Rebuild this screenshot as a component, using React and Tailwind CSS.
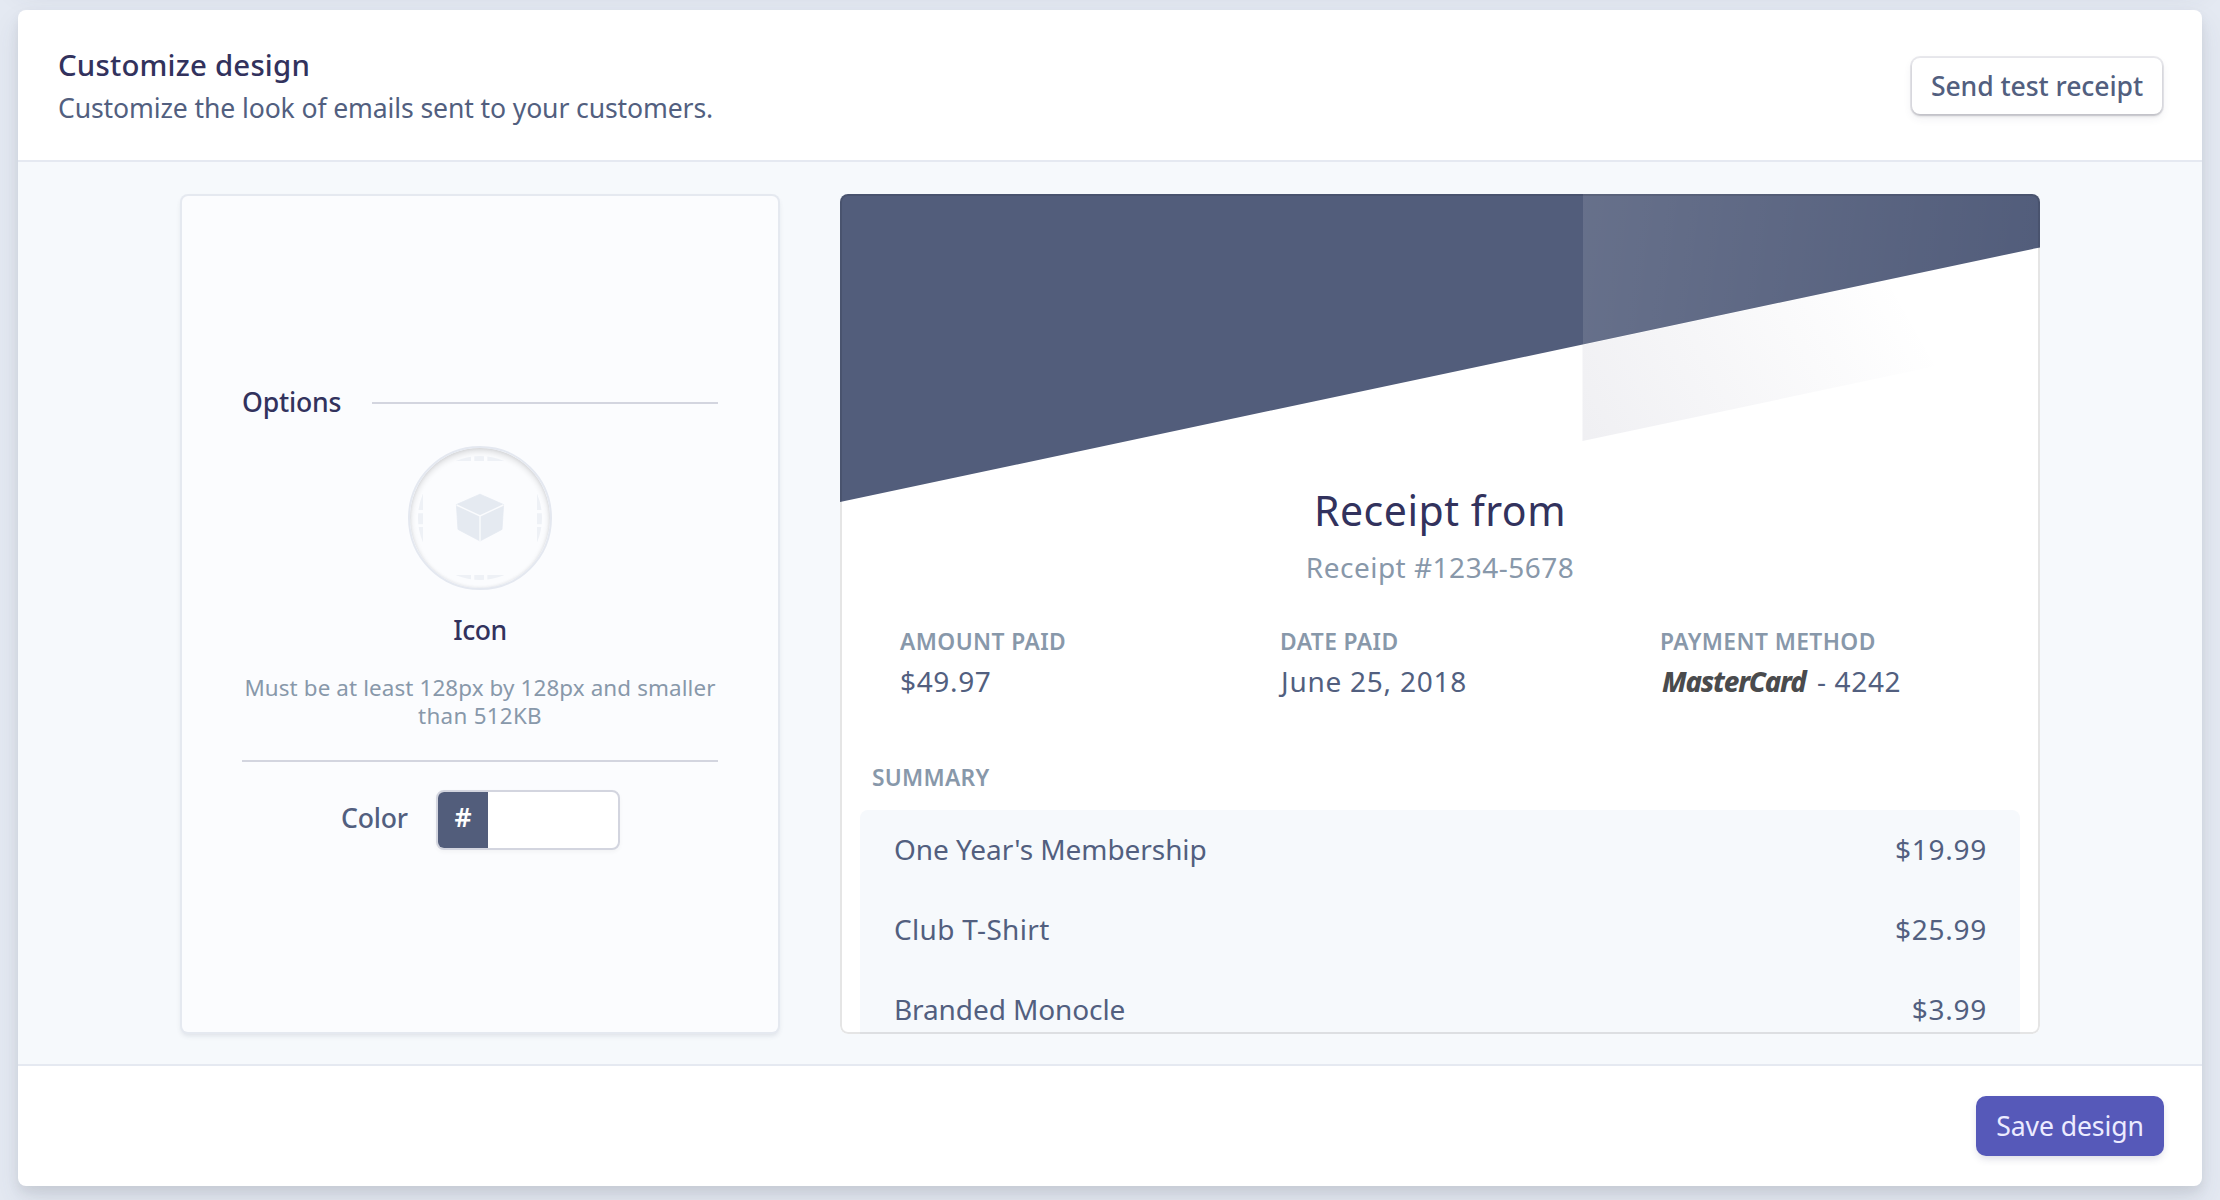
import React from "react";

const items = [
  { name: "One Year's Membership", price: "$19.99", tracking: "tracking-[-0.07px]" },
  { name: "Club T-Shirt", price: "$25.99", tracking: "tracking-[0.32px]" },
  { name: "Branded Monocle", price: "$3.99", tracking: "tracking-[-0.1px]" },
];

function IconPlaceholder() {
  return (
    <div className="mx-auto mt-6 size-[144px] shrink-0 rounded-full border-2 border-[#e4e8f0] bg-[#fbfcfe] shadow-[inset_0_3px_6px_rgba(0,0,0,0.14),inset_0_0_3px_rgba(60,66,87,0.1)]">
      <svg className="-m-[2px] size-[144px]" viewBox="0 0 144 144" aria-hidden="true">
        <defs>
          <clipPath id="dash-ring">
            <circle cx="72" cy="72" r="62" />
          </clipPath>
        </defs>
        <g clipPath="url(#dash-ring)" fill="#eef1f6">
          <path d="M48 10h15v5h-15zM66.3 10h9.7v5h-9.7zM79.4 10h16.6v5h-16.6z" />
          <path d="M48 129h15v5h-15zM66.3 129h9.7v5h-9.7zM79.4 129h16.6v5h-16.6z" />
          <path d="M10 48h5v16h-5zM10 67.3h5v11h-5zM10 81h5v16h-5z" />
          <path d="M129 48h5v16h-5zM129 67.3h5v11h-5zM129 81h5v16h-5z" />
        </g>
        <path
          d="M72 48.2 95.6 58.6 94 83.4 72 95 50 83.4 48.4 58.6Z"
          fill="#e5eaf1"
          stroke="#e5eaf1"
          strokeWidth="0.8"
          strokeLinejoin="round"
        />
        <path d="M48.6 59 72 70 95.4 59M72 70V95" fill="none" stroke="#fafbfd" strokeWidth="1.4" />
      </svg>
    </div>
  );
}

function OptionsPanel() {
  return (
    <section className="flex h-[836px] w-[596px] flex-col rounded-[6px] bg-[#fbfcfe] px-[60px] pt-[186px] shadow-[0_0_0_2px_#e5e9f0,0_3px_5px_1px_rgba(60,66,87,0.12)]">
      <div className="flex h-10 items-start">
        <h2 className="w-[130px] text-[26.6px] font-medium leading-[40px] tracking-[-0.2px] text-[#32325d]">
          Options
        </h2>
        <div className="mt-5 h-[2px] flex-1 bg-[#d3d5df]" />
      </div>
      <IconPlaceholder />
      <h3 className="mt-5 text-center text-[26.6px] font-medium leading-[40px] tracking-[-0.5px] text-[#32325d]">
        Icon
      </h3>
      <p className="mt-6 whitespace-nowrap text-center text-[22.4px] leading-[28px] tracking-[0.12px] text-[#8898aa]">
        Must be at least 128px by 128px and smaller
        <br />
        <span className="tracking-[0.3px]">than 512KB</span>
      </p>
      <div className="mt-[30px] h-[2px] bg-[#d3d5df]" />
      <label className="mt-7 flex h-[60px] items-center pl-[99px]">
        <span className="w-[95px] pb-[5px] text-[26.6px] font-medium leading-[40px] tracking-[-0.2px] text-[#525f7f]">
          Color
        </span>
        <span className="flex h-[60px] w-[184px] overflow-hidden rounded-[8px] border-2 border-[#d3d5df] bg-white shadow-[0_2px_4px_rgba(0,0,0,0.04)]">
          <span className="w-[50px] bg-[#525d7b] pb-[5px] text-center text-[26.6px] font-semibold leading-[51px] text-white">
            #
          </span>
        </span>
      </label>
    </section>
  );
}

function ReceiptBanner() {
  return (
    <svg
      className="absolute left-0 top-0 h-[308px] w-[1200px]"
      viewBox="0 0 1200 308"
      aria-hidden="true"
    >
      <defs>
        <linearGradient id="shade" gradientUnits="userSpaceOnUse" x1="743" y1="247" x2="1050" y2="74">
          <stop offset="0" stopColor="#32325d" stopOpacity="0.075" />
          <stop offset="1" stopColor="#32325d" stopOpacity="0" />
        </linearGradient>
        <linearGradient id="sheen" gradientUnits="userSpaceOnUse" x1="743" y1="0" x2="1200" y2="60">
          <stop offset="0" stopColor="#fff" stopOpacity="0.12" />
          <stop offset="1" stopColor="#fff" stopOpacity="0" />
        </linearGradient>
      </defs>
      <path d="M742.5 151 1200 53.6V150L742.5 247Z" fill="url(#shade)" />
      <path d="M0 0H1200V53.4L0 308Z" fill="#525d7b" />
      <path d="M743 0H1200V53.4L743 150.4Z" fill="url(#sheen)" />
    </svg>
  );
}

function Detail({ label, children }) {
  return (
    <div>
      <dt className="text-[22.8px] font-semibold leading-[28px] tracking-[0.4px] text-[#8898aa]">
        {label}
      </dt>
      <dd className="mt-[5px] flex h-10 text-[28px] leading-[40px] tracking-[0.65px] text-[#525f7f]">
        {children}
      </dd>
    </div>
  );
}

function ReceiptPreview() {
  return (
    <section className="relative -mt-[2px] ml-[62px] h-[840px] w-[1200px] overflow-hidden rounded-[8px] bg-white">
      <ReceiptBanner />
      <div className="relative flex flex-col pt-[292px]">
        <h2 className="text-center text-[41px] leading-[48px] tracking-[0.5px] text-[#32325d]">
          Receipt from
        </h2>
        <p className="mt-[13px] text-center text-[28px] leading-[40px] tracking-[0.5px] text-[#8898aa]">
          Receipt #1234-5678
        </p>
        <dl className="mt-[41px] grid grid-cols-3 pl-[60px]">
          <Detail label="AMOUNT PAID">$49.97</Detail>
          <Detail label="DATE PAID">
            <span className="pl-px tracking-[0.75px]">June 25, 2018</span>
          </Detail>
          <Detail label="PAYMENT METHOD">
            <span className="w-[157px] pl-[2px] text-[27.6px] font-extrabold italic tracking-[-1.2px] text-[#4a4b4d]">
              MasterCard
            </span>
            <span>- 4242</span>
          </Detail>
        </dl>
        <h3 className="mt-[63px] pl-8 text-[22.8px] font-semibold leading-[28px] tracking-[0.25px] text-[#8898aa]">
          SUMMARY
        </h3>
        <ul className="mx-5 mt-[18px] rounded-[8px] bg-[#f6f9fc] pl-[34px] pr-[33px]">
          {items.map((item) => (
            <li
              key={item.name}
              className="flex h-20 items-center justify-between pb-[2px] text-[28px] leading-[40px] text-[#525f7f]"
            >
              <span className={item.tracking}>{item.name}</span>
              <span className="tracking-[0.75px]">{item.price}</span>
            </li>
          ))}
        </ul>
      </div>
      <div className="pointer-events-none absolute inset-0 rounded-[8px] border-2 border-black/10" />
    </section>
  );
}

const cardShadow =
  "shadow-[0_14px_28px_rgba(60,66,87,0.1),0_6px_12px_rgba(0,0,0,0.07)]";

export default function App() {
  return (
    <div className="h-[1200px] w-[2220px] overflow-hidden bg-[#e4e9f2] px-[18px] font-['Noto_Sans',sans-serif]">
      <div className={"-mt-[82px] h-[60px] rounded-[8px] bg-white " + cardShadow} />
      <main className={"mt-8 h-[1176px] overflow-visible rounded-[8px] bg-white " + cardShadow}>
        <header className="flex h-[152px] justify-between border-b-2 border-[#e5e9f1] pl-10 pr-10">
          <div className="pt-[34px]">
            <h1 className="text-[29.4px] font-medium leading-[42px] tracking-[0.2px] text-[#32325d]">
              Customize design
            </h1>
            <p className="text-[26.6px] leading-[44px] tracking-[-0.13px] text-[#525f7f]">
              Customize the look of emails sent to your customers.
            </p>
          </div>
          <button className="mt-12 h-14 w-[250px] rounded-[8px] bg-white text-[26.6px] font-medium leading-[56px] tracking-[-0.08px] text-[#525f7f] shadow-[0_0_0_2px_rgba(50,50,93,0.1),0_2px_3px_rgba(0,0,0,0.15),0_4px_10px_rgba(50,50,93,0.08)]">
            Send test receipt
          </button>
        </header>
        <div className="flex h-[904px] border-b-2 border-[#e5e9f1] bg-[#f6f9fc] pl-[164px] pt-[34px]">
          <OptionsPanel />
          <ReceiptPreview />
        </div>
        <footer className="flex justify-end pr-10 pt-8">
          <button className="h-14 w-[184px] rounded-[8px] bg-[#5659b9] text-[26.6px] leading-[56px] tracking-[-0.1px] text-[#ecebff] shadow-[0_0_0_2px_#5659b9,0_4px_8px_rgba(50,50,93,0.2)]">
            Save design
          </button>
        </footer>
      </main>
    </div>
  );
}
